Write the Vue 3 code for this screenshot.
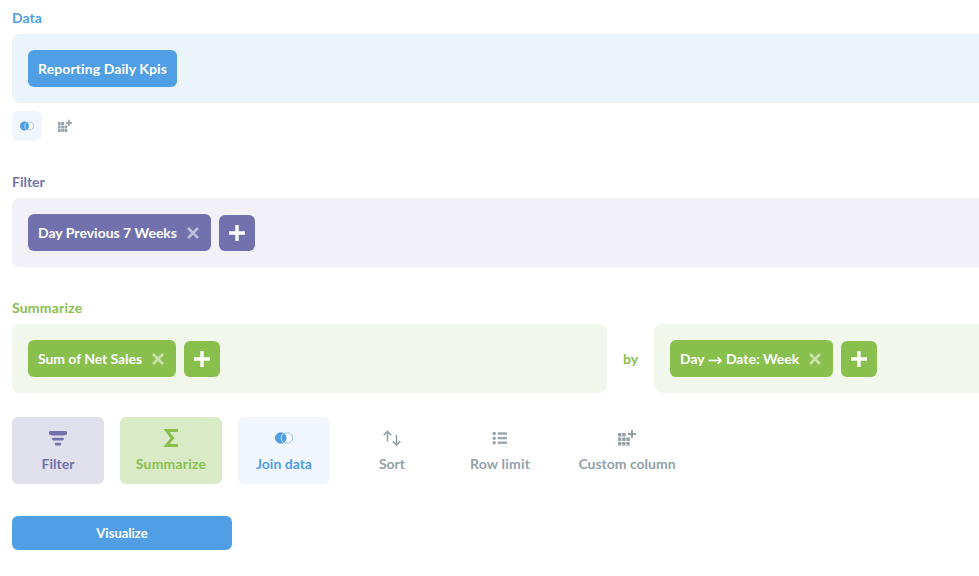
<template>
  <div class="viewport">
    <div class="page">
      <section class="step step-data">
        <div class="step-label">Data</div>
        <div class="panel">
          <div class="pill wide-text">Reporting Daily Kpis</div>
        </div>
        <div class="mini-actions">
          <button class="mini mini-join">
            <svg width="14" height="16" viewBox="0 0 18 20">
              <circle cx="12.4" cy="10" r="5.1" fill="#fff" stroke="#8dbeec" stroke-width="1" />
              <circle cx="5.8" cy="10" r="5.8" fill="#509ee3" />
              <path d="M8.4 5.6a5.4 5.4 0 0 0 0 8.8" fill="none" stroke="#d5e6f8" stroke-width="1" />
            </svg>
          </button>
          <button class="mini">
            <svg width="14" height="16" viewBox="0 0 18 20" fill="#93a1ab">
              <path d="M0 5h3.4v3.6H0zM4.2 5h3.4v3.6H4.2zM0 9.5h3.4v3.6H0zM4.2 9.5h3.4v3.6H4.2zM8.4 9.5h3.4v3.6H8.4zM0 14h3.4v3.6H0zM4.2 14h3.4v3.6H4.2zM8.4 14h3.4v3.6H8.4z" />
              <path d="M13 2h2v3h3v2h-3v3h-2V7h-3V5h3z" />
            </svg>
          </button>
        </div>
      </section>

      <section class="step step-filter">
        <div class="step-label">Filter</div>
        <div class="panel">
          <div class="pill">
            Day Previous 7 Weeks
            <svg class="close" width="12" height="12" viewBox="0 0 12 12"><path d="M1 1l10 10M11 1L1 11" /></svg>
          </div>
          <button class="add"><svg width="16" height="16" viewBox="0 0 16 16"><path d="M8 0v16M0 8h16" /></svg></button>
        </div>
      </section>

      <section class="step step-summarize">
        <div class="step-label wider-text">Summarize</div>
        <div class="summary-row">
          <div class="panel">
            <div class="pill narrow-text">
              Sum of Net Sales
              <svg class="close" width="12" height="12" viewBox="0 0 12 12"><path d="M1 1l10 10M11 1L1 11" /></svg>
            </div>
            <button class="add"><svg width="16" height="16" viewBox="0 0 16 16"><path d="M8 0v16M0 8h16" /></svg></button>
          </div>
          <div class="by">by</div>
          <div class="panel">
            <div class="pill">
              <span>Day <span class="arrow">→</span> Date: Week</span>
              <svg class="close" width="12" height="12" viewBox="0 0 12 12"><path d="M1 1l10 10M11 1L1 11" /></svg>
            </div>
            <button class="add"><svg width="16" height="16" viewBox="0 0 16 16"><path d="M8 0v16M0 8h16" /></svg></button>
          </div>
        </div>
      </section>

      <div class="actions">
        <button class="action a-filter">
          <svg width="18" height="20" viewBox="0 0 18 20" fill="#7172ad">
            <path d="M2 3h14a2 2 0 0 1 .4 4L15 7.5H3L1.6 7A2 2 0 0 1 2 3z" />
            <rect x="3" y="9.7" width="12" height="2.7" rx="1.3" />
            <rect x="5.7" y="14.7" width="6.6" height="2.7" rx="1.3" />
          </svg>
          <span>Filter</span>
        </button>
        <button class="action a-summarize">
          <svg width="18" height="20" viewBox="0 0 18 20" fill="none" stroke="#88bf4d" stroke-width="3">
            <path d="M16 2.5H4.5L10.5 10L4.5 17.5H16" />
          </svg>
          <span class="wider-text">Summarize</span>
        </button>
        <button class="action a-join">
          <svg width="18" height="20" viewBox="0 0 18 20">
            <circle cx="12.4" cy="10" r="5.1" fill="#fff" stroke="#8dbeec" stroke-width="1" />
            <circle cx="5.8" cy="10" r="5.8" fill="#509ee3" />
            <path d="M8.4 5.6a5.4 5.4 0 0 0 0 8.8" fill="none" stroke="#d5e6f8" stroke-width="1" />
          </svg>
          <span>Join data</span>
        </button>
        <button class="action a-plain">
          <svg width="18" height="20" viewBox="0 0 18 20" fill="none" stroke="#93a1ab" stroke-width="1.6">
            <path d="M4.5 13.5V3.5M0.7 7.3L4.5 3.5l3.8 3.8M13.5 7v10M9.7 13.2l3.8 3.8 3.8-3.8" />
          </svg>
          <span>Sort</span>
        </button>
        <button class="action a-plain">
          <svg width="18" height="20" viewBox="0 0 18 20" fill="#93a1ab">
            <circle cx="3.2" cy="5.5" r="1.7" /><circle cx="3.2" cy="10.2" r="1.7" /><circle cx="3.2" cy="14.7" r="1.7" />
            <rect x="6.7" y="4.4" width="9.3" height="2.2" /><rect x="6.7" y="9.1" width="9.3" height="2.2" /><rect x="6.7" y="13.6" width="9.3" height="2.2" />
          </svg>
          <span class="wider-text">Row limit</span>
        </button>
        <button class="action a-plain a-wide">
          <svg width="18" height="20" viewBox="0 0 18 20" fill="#93a1ab">
            <path d="M0 5h3.4v3.6H0zM4.2 5h3.4v3.6H4.2zM0 9.5h3.4v3.6H0zM4.2 9.5h3.4v3.6H4.2zM8.4 9.5h3.4v3.6H8.4zM0 14h3.4v3.6H0zM4.2 14h3.4v3.6H4.2zM8.4 14h3.4v3.6H8.4z" />
            <path d="M13 2h2v3h3v2h-3v3h-2V7h-3V5h3z" />
          </svg>
          <span>Custom column</span>
        </button>
      </div>

      <button class="visualize">Visualize</button>
    </div>
  </div>
</template>

<script setup>
</script>

<style scoped>
.viewport {
  width: 979px;
  height: 576px;
  overflow: hidden;
  background: #fff;
  font-family: Lato, "Open Sans", sans-serif;
  font-weight: 700;
  font-size: 14px;
}
.page {
  width: 1040px;
  padding: 10px 0 0 12px;
}
button {
  font: inherit;
  border: none;
  padding: 0;
  cursor: pointer;
}
.step-label {
  height: 16px;
  line-height: 16px;
  margin-bottom: 8px;
}
.narrow-text { letter-spacing: -0.06px; }
.wide-text { letter-spacing: 0.1px; }
.wider-text { letter-spacing: 0.2px; }
.panel {
  display: flex;
  align-items: center;
  gap: 8px;
  height: 69px;
  padding: 0 16px;
  border-radius: 8px;
  box-sizing: border-box;
}
.pill {
  display: flex;
  align-items: center;
  gap: 10px;
  height: 37px;
  padding: 0 10px;
  border-radius: 6px;
  color: #fff;
  white-space: nowrap;
}
.arrow {
  font-family: "DejaVu Sans", sans-serif;
  font-size: 17.5px;
  font-weight: 400;
  line-height: 0;
  vertical-align: -1.5px;
}
.add {
  display: flex;
  align-items: center;
  justify-content: center;
  width: 36px;
  height: 36px;
  border-radius: 6px;
}
.add path {
  stroke: #fff;
  stroke-width: 3.4;
  fill: none;
}
.close {
  margin-right: 2px;
}
.close path {
  stroke: rgba(255, 255, 255, 0.55);
  stroke-width: 2.6;
  fill: none;
}

.step-data .step-label { color: #509ee3; }
.step-data .panel { background: #ebf3fb; }
.step-data .pill { background: #509ee3; }

.step-filter { margin-top: 33px; }
.step-filter .step-label { color: #7172ad; }
.step-filter .panel { background: #f1f1f7; }
.step-filter .pill, .step-filter .add { background: #7172ad; }

.step-summarize { margin-top: 33px; }
.step-summarize .step-label { color: #88bf4d; }
.step-summarize .panel { background: #f2f7ec; }
.step-summarize .pill, .step-summarize .add { background: #88bf4d; }

.mini-actions {
  display: flex;
  gap: 8px;
  margin-top: 8px;
}
.mini {
  display: flex;
  align-items: center;
  justify-content: center;
  width: 30px;
  height: 30px;
  border-radius: 6px;
  background: transparent;
}
.mini-join { background: #f1f6fd; }

.summary-row {
  display: grid;
  grid-template-columns: 595px 47px 1fr;
}
.by {
  display: flex;
  align-items: center;
  justify-content: center;
  color: #88bf4d;
}

.actions {
  display: flex;
  gap: 16px;
  margin-top: 24px;
}
.action {
  display: flex;
  flex-direction: column;
  align-items: center;
  width: 92px;
  height: 67px;
  padding-top: 11px;
  box-sizing: border-box;
  border-radius: 6px;
  background: transparent;
  color: #93a1ab;
}
.action span {
  margin-top: 7px;
  line-height: 18px;
}
.a-filter { background: #e0e0ec; color: #7172ad; }
.a-summarize { width: 102px; background: #d9eac6; color: #88bf4d; }
.a-join { background: #f1f6fd; color: #509ee3; }
.a-wide { width: 130px; }

.visualize {
  display: block;
  width: 220px;
  height: 34px;
  margin-top: 32px;
  border-radius: 6px;
  background: #509ee3;
  color: #fff;
  font-size: 13px;
}
</style>
